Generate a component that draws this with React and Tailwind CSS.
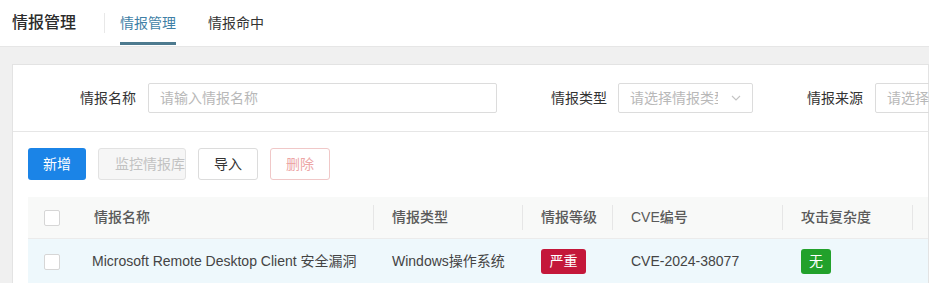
import React from "react";

const font = { fontFamily: '"Liberation Sans", "Noto Sans CJK SC", sans-serif' };

function Checkbox() {
  return <div className="w-[16px] h-[16px] border border-[#d6d6d6] rounded-[2px] bg-white" />;
}

function HeadCell({ w, children, last }) {
  return (
    <div className={`${w} h-full flex items-center relative pl-[18px] shrink-0`}>
      {children}
      {!last && <div className="absolute right-0 top-[8px] bottom-[8px] w-px bg-[#e6e6e6]" />}
    </div>
  );
}

export default function App() {
  return (
    <div className="w-[929px] h-[283px] overflow-hidden bg-[#f0f0f0] text-[14px]" style={font}>
      <div className="h-[47px] bg-white border-b border-[#e6e6e6] flex items-center pl-[12px]">
        <div className="text-[16px] text-[#2b2b2b] font-medium">情报管理</div>
        <div className="ml-[28px] w-px h-[20px] bg-[#e8e8e8]" />
        <div className="ml-[15px] h-full relative flex items-center text-[#3f7fa6]">
          情报管理
          <div className="absolute left-0 right-0 bottom-[1px] h-[3px] bg-[#4d7a8f]" />
        </div>
        <div className="ml-[32px] text-[#333]">情报命中</div>
      </div>
      <div className="pl-[12px] pt-[17px]">
        <div className="bg-white border border-[#e3e3e3] h-[260px]">
          <div className="h-[67px] border-b border-[#e6e6e6] flex items-center pl-[67px] whitespace-nowrap">
            <span className="text-[#333]">情报名称</span>
            <div className="ml-[12px] w-[349px] h-[30px] border border-[#dcdcdc] rounded-[2px] flex items-center px-[11px] text-[#b8b8b8] shrink-0">请输入情报名称</div>
            <span className="ml-[54px] text-[#333]">情报类型</span>
            <div className="ml-[11px] w-[135px] h-[30px] border border-[#dcdcdc] rounded-[2px] flex items-center pl-[11px] pr-[10px] text-[#b8b8b8] shrink-0 overflow-hidden">
              <span className="overflow-hidden w-[88px] whitespace-nowrap">请选择情报类型</span>
              <svg className="ml-auto" width="12" height="12" viewBox="0 0 12 12" fill="none" stroke="#c4c4c4" strokeWidth="1.1"><path d="M2 4l4 4 4-4" /></svg>
            </div>
            <span className="ml-[54px] text-[#333]">情报来源</span>
            <div className="ml-[12px] w-[200px] h-[30px] border border-[#dcdcdc] rounded-[2px] flex items-center px-[11px] text-[#b8b8b8] shrink-0">请选择情报来源</div>
          </div>
          <div className="pl-[15px] pt-[16px] flex gap-[12px]">
            <button className="w-[58px] h-[32px] rounded-[3px] bg-[#1b84e7] text-white">新增</button>
            <button className="w-[88px] h-[32px] rounded-[3px] bg-[#f6f6f6] border border-[#e2e2e2] text-[#c2c2c2] overflow-hidden whitespace-nowrap pl-[16px] text-left">监控情报库</button>
            <button className="w-[60px] h-[32px] rounded-[3px] bg-white border border-[#dcdcdc] text-[#333]">导入</button>
            <button className="w-[60px] h-[32px] rounded-[3px] bg-white border border-[#f0c8c8] text-[#eda6a6]">删除</button>
          </div>
          <div className="ml-[15px] mt-[17px]">
            <div className="h-[41px] bg-[#f8f9f8] flex items-center text-[#5a5a5a] font-medium whitespace-nowrap">
              <div className="w-[48px] h-full flex items-center pl-[16px] shrink-0"><Checkbox /></div>
              <HeadCell w="w-[298px]">情报名称</HeadCell>
              <HeadCell w="w-[149px]">情报类型</HeadCell>
              <HeadCell w="w-[90px]">情报等级</HeadCell>
              <HeadCell w="w-[170px]">CVE编号</HeadCell>
              <HeadCell w="w-[130px]">攻击复杂度</HeadCell>
            </div>
            <div className="h-[46px] bg-[#eef8fc] border-t border-[#ebebeb] flex items-center text-[#444] whitespace-nowrap">
              <div className="w-[48px] h-full flex items-center pl-[16px] shrink-0"><Checkbox /></div>
              <div className="w-[298px] pl-[16px] shrink-0">Microsoft Remote Desktop Client 安全漏洞</div>
              <div className="w-[149px] pl-[18px] shrink-0">Windows操作系统</div>
              <div className="w-[90px] pl-[18px] shrink-0">
                <span className="inline-flex items-center justify-center h-[25px] w-[45px] rounded-[3px] bg-[#c4173a] text-white">严重</span>
              </div>
              <div className="w-[170px] pl-[18px] shrink-0">CVE-2024-38077</div>
              <div className="w-[130px] pl-[18px] shrink-0">
                <span className="inline-flex items-center justify-center h-[25px] w-[30px] rounded-[3px] bg-[#22a12b] text-white">无</span>
              </div>
            </div>
          </div>
        </div>
      </div>
    </div>
  );
}
